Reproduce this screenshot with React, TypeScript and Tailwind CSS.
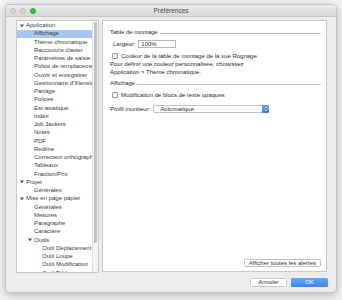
import React from "react";

type Item = { label: string; indent: number; folder?: boolean; selected?: boolean };

const items: Item[] = [
  { label: "Application", indent: 20, folder: true },
  { label: "Affichage", indent: 34, selected: true },
  { label: "Thème chromatique", indent: 34 },
  { label: "Raccourcis clavier", indent: 34 },
  { label: "Paramètres de saisie", indent: 34 },
  { label: "Police de remplacement", indent: 34 },
  { label: "Ouvrir et enregistrer", indent: 34 },
  { label: "Gestionnaire d'Xtensions", indent: 34 },
  { label: "Partage", indent: 34 },
  { label: "Polices", indent: 34 },
  { label: "Est-asiatique", indent: 34 },
  { label: "Index", indent: 34 },
  { label: "Job Jackets", indent: 34 },
  { label: "Notes", indent: 34 },
  { label: "PDF", indent: 34 },
  { label: "Redline", indent: 34 },
  { label: "Correcteur orthographique", indent: 34 },
  { label: "Tableaux", indent: 34 },
  { label: "Fraction/Prix", indent: 34 },
  { label: "Projet", indent: 20, folder: true },
  { label: "Générales", indent: 34 },
  { label: "Mise en page papier", indent: 20, folder: true },
  { label: "Générales", indent: 34 },
  { label: "Mesures", indent: 34 },
  { label: "Paragraphe", indent: 34 },
  { label: "Caractère", indent: 34 },
  { label: "Outils", indent: 28, folder: true },
  { label: "Outil Déplacement", indent: 42 },
  { label: "Outil Loupe", indent: 42 },
  { label: "Outil Modification", indent: 42 },
  { label: "Outil Tableaux", indent: 42 },
];

function Tri() {
  return (
    <svg width="4" height="4" viewBox="0 0 4 4" className="mr-[2px] shrink-0">
      <path d="M0 0.6 L4 0.6 L2 3.6 Z" fill="#555" />
    </svg>
  );
}

function Checkbox() {
  return (
    <div className="w-[6px] h-[6px] rounded-[1px] border border-[#9a9a9a] bg-white shrink-0" />
  );
}

function Header({ label }: { label: string }) {
  return (
    <div className="flex items-center h-[8px]">
      <span className="shrink-0">{label}</span>
      <div className="flex-1 h-px bg-[#b8b8b8] ml-[2px] mt-[3px]" />
    </div>
  );
}

export default function App() {
  return (
    <div
      className="w-[342px] h-[300px] bg-[#f3f3f3] pt-[4px] pl-[5px] overflow-hidden text-[6px] text-[#2b2b2b]"
      style={{ fontFamily: '"Liberation Sans", Arial, sans-serif' }}
    >
      <div className="w-[332px] h-[289px] rounded-[4px] bg-[#ececec] border border-[#c4c4c4] shadow-[0_2px_8px_rgba(0,0,0,0.25)] flex flex-col overflow-hidden">
        {/* Title bar */}
        <div className="relative h-[12px] bg-gradient-to-b from-[#ebebeb] to-[#d8d8d8] border-b border-[#c6c6c6] flex items-center shrink-0">
          <div className="flex items-center gap-[4px] pl-[4px]">
            <div className="w-[6px] h-[6px] rounded-full bg-[#d3d3d3] border border-[#c0c0c0]" />
            <div className="w-[6px] h-[6px] rounded-full bg-[#d3d3d3] border border-[#c0c0c0]" />
            <div className="w-[6px] h-[6px] rounded-full bg-[#2fc840] border border-[#26a834]" />
          </div>
          <div className="absolute inset-0 flex items-center justify-center text-[6.5px] text-[#4a4a4a]">
            Préférences
          </div>
        </div>

        {/* Body */}
        <div className="flex pl-[10px] pt-[3px] gap-[3px]">
          {/* Sidebar */}
          <div className="w-[83px] h-[253px] bg-white border border-[#c8c8c8] flex overflow-hidden">
            <div className="w-[76px] pt-[0.5px] overflow-hidden">
              {items.map((it, i) => (
                <div
                  key={i}
                  className={
                    "h-[8.25px] flex items-center whitespace-nowrap text-[#3a3a3a] " +
                    (it.selected ? "bg-[#a6c6f4]" : "")
                  }
                  style={{ paddingLeft: it.indent - 17 }}
                >
                  {it.folder && <Tri />}
                  <span>{it.label}</span>
                </div>
              ))}
            </div>
            <div className="w-[6px] bg-[#f4f4f4] border-l border-[#e2e2e2] pt-[1px] pl-[1px]">
              <div className="w-[3px] h-[221px] rounded-full bg-[#c2c2c2]" />
            </div>
          </div>

          {/* Right panel */}
          <div className="w-[225px] h-[252px] bg-white border border-[#c8c8c8] flex flex-col pl-[7px] pr-[5px] pt-[7px] pb-[4px]">
            <Header label="Table de montage" />
            <div className="flex items-center h-[8px] mt-[4px] pl-[3px]">
              <span>Largeur:</span>
              <div className="ml-[3px] w-[38px] h-[8px] border border-[#b5b5b5] flex items-center pl-[2px] bg-white">
                100%
              </div>
            </div>
            <div className="flex items-center h-[8px] mt-[4px] pl-[2px] gap-[3px]">
              <Checkbox />
              <span>Couleur de la table de montage de la vue Rognage</span>
            </div>
            <div className="leading-[8px] mt-[0px]">
              Pour définir une couleur personnalisée, choisissez
              <br />
              Application &gt; Thème chromatique.
            </div>
            <div className="mt-[3px]">
              <Header label="Affichage" />
            </div>
            <div className="flex items-center h-[8px] mt-[4px] pl-[2px] gap-[3px]">
              <Checkbox />
              <span>Modification de blocs de texte opaques</span>
            </div>
            <div className="flex items-center h-[8px] mt-[6px]">
              <span>Profil moniteur:</span>
              <div className="ml-[3px] w-[116px] h-[8px] border border-[#c0c0c0] rounded-[1px] flex items-center bg-white">
                <span className="flex-1 pl-[6px] italic">Automatique</span>
                <div className="w-[7px] h-[8px] -mr-px -my-px rounded-[1.5px] bg-gradient-to-b from-[#6aa8f8] to-[#2f7ef0] flex items-center justify-center">
                  <svg width="4" height="6" viewBox="0 0 4 6">
                    <path d="M0.8 2.3 L2 1 L3.2 2.3 M0.8 3.7 L2 5 L3.2 3.7" stroke="white" strokeWidth="0.7" fill="none" />
                  </svg>
                </div>
              </div>
            </div>
            <div className="mt-auto self-end h-[8px] px-[4px] border border-[#c4c4c4] rounded-[1px] bg-white flex items-center text-[#333]">
              Afficher toutes les alertes
            </div>
          </div>
        </div>

        {/* Footer buttons */}
        <div className="flex justify-end gap-[4px] pr-[8px] mt-[5px]">
          <div className="w-[37px] h-[9px] bg-white border border-[#c8c8c8] rounded-[1.5px] flex items-center justify-center text-[#333]">
            Annuler
          </div>
          <div className="w-[37px] h-[9px] bg-gradient-to-b from-[#69a6fa] to-[#3a84f4] rounded-[1.5px] flex items-center justify-center text-white">
            OK
          </div>
        </div>
      </div>
    </div>
  );
}
